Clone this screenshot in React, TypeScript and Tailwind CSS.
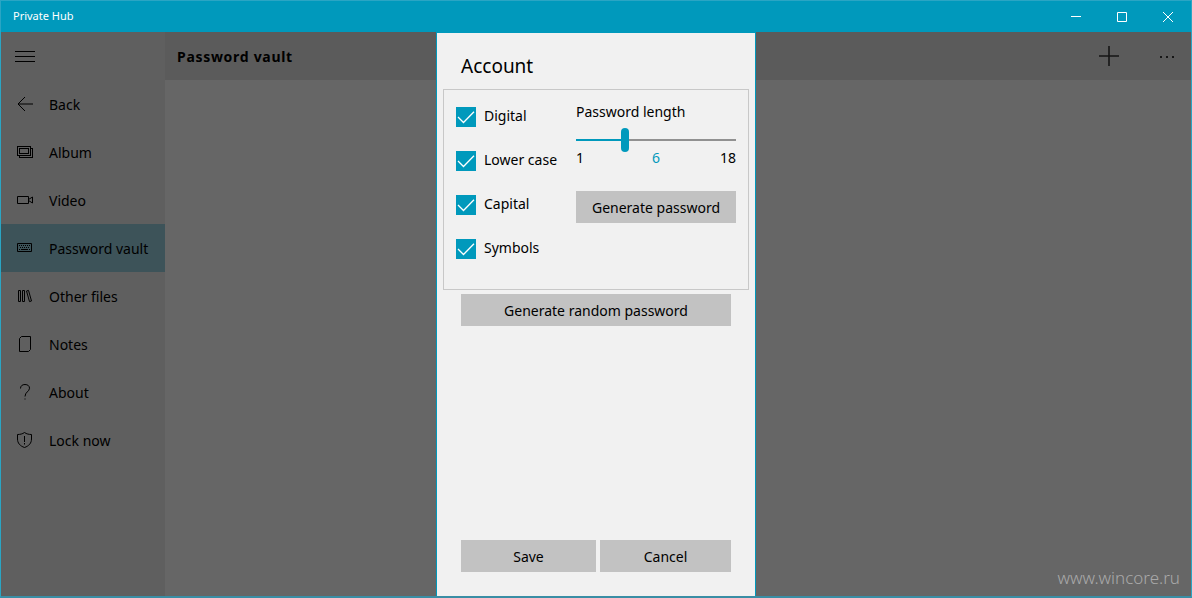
import { useState, type ReactNode } from "react";

const navItems: { label: string; icon: ReactNode }[] = [
  { label: "Back", icon: <path d="M16 8H1M8 1 1 8l7 7" /> },
  {
    label: "Album",
    icon: (
      <g shapeRendering="crispEdges">
        <path d="M.5 2.5h13v9H.5zM2.5 4.5h9v5h-9zM14 4.5h1.5v9h-13V12" />
      </g>
    ),
  },
  { label: "Video", icon: <path d="M.5 4.5h11v7H.5zM11.5 7.500l4-2.500v6l-4-2.500" /> },
  {
    label: "Password vault",
    icon: (
      <>
        <path d="M.5 3.5h14v8H.5z" />
        <path d="M2 5.5h11M3 7.5h10" strokeDasharray="1 1" />
        <path d="M2 9.5h1M4 9.5h7M12 9.5h1" />
      </>
    ),
  },
  {
    label: "Other files",
    icon: <path d="M1.5 2.5h2v11h-2zM5.5 2.5h2v11h-2zM9.5 3l2-.6 3 10.6-2 .6z" />,
  },
  { label: "Notes", icon: <path d="M4.500.5h9v13l-2 2h-9v-13z" /> },
  {
    label: "About",
    icon: (
      <>
        <path d="M3.5 4.5C3.5 2 5.200.5 8 .5s4.500 1.500 4.500 3.700c0 3.300-4.500 3.800-4.500 8.300" />
        <path d="M7.500 15h1" />
      </>
    ),
  },
  {
    label: "Lock now",
    icon: (
      <>
        <path d="M7.500.5c2 1.500 4.500 2 7 2V7c0 4-2.500 7-7 8.500C3 14 .5 11 .5 7V2.500c2.500 0 5-.5 7-2z" />
        <path d="M7.500 4v6M7.500 11v1.500" />
      </>
    ),
  },
];

const charSets = ["Digital", "Lower case", "Capital", "Symbols"];

const MIN = 1;
const MAX = 18;

function Icon({ children }: { children: ReactNode }) {
  return (
    <svg viewBox="0 0 16 16" className="size-4 shrink-0" fill="none" stroke="currentColor" aria-hidden="true">
      {children}
    </svg>
  );
}

function CheckRow({ label }: { label: string }) {
  return (
    <label className="flex h-5 items-start gap-2">
      <span className="grid size-5 shrink-0">
        <input
          type="checkbox"
          defaultChecked
          className="peer col-start-1 row-start-1 size-5 appearance-none border-2 border-[#666] checked:border-[#0099bc] checked:bg-[#0099bc]"
        />
        <svg
          viewBox="0 0 20 20"
          className="pointer-events-none invisible col-start-1 row-start-1 size-5 peer-checked:visible"
          fill="none"
          stroke="white"
          strokeWidth="1.3"
          aria-hidden="true"
        >
          <path d="m2 10 5.500 5.500L18 4.800" />
        </svg>
      </span>
      <span className="leading-[18px] whitespace-nowrap">{label}</span>
    </label>
  );
}

function Button({ children, className = "" }: { children: ReactNode; className?: string }) {
  return (
    <button type="button" className={`h-8 bg-[#c2c2c2] whitespace-nowrap hover:bg-[#b5b5b5] ${className}`}>
      {children}
    </button>
  );
}

function AccountDialog() {
  const [length, setLength] = useState(6);
  const filled = ((length - MIN) / (MAX - MIN)) * 100;

  return (
    <section
      role="dialog"
      aria-labelledby="dialog-title"
      className="absolute inset-y-0 left-1/2 flex w-80 -translate-x-1/2 flex-col border-x border-t border-[#0099bc] bg-[#f1f1f1] pb-6"
    >
      <h2 id="dialog-title" className="px-6 pt-[19px] pb-[9px] text-[19px] leading-7">
        Account
      </h2>

      {/* Password rules */}
      <div className="mx-[6px] flex h-[201px] justify-between border border-[#c8c8c8] px-3">
        <div className="flex flex-col gap-6 pt-[17px]">
          {charSets.map((c) => (
            <CheckRow key={c} label={c} />
          ))}
        </div>
        <div className="flex w-40 flex-col pt-3">
          <label htmlFor="length" className="leading-5">
            Password length
          </label>
          <div className="mt-[6px] grid h-6 items-center">
            <div className="col-start-1 row-start-1 h-[2px] bg-[#919191]">
              <div className="h-full bg-[#0099bc]" style={{ width: `${filled}%` }} />
            </div>
            <input
              id="length"
              type="range"
              min={MIN}
              max={MAX}
              value={length}
              onChange={(e) => setLength(Number(e.target.value))}
              className="z-10 col-start-1 row-start-1 h-6 w-full appearance-none bg-transparent [&::-webkit-slider-thumb]:h-6 [&::-webkit-slider-thumb]:w-2 [&::-webkit-slider-thumb]:appearance-none [&::-webkit-slider-thumb]:rounded-full [&::-webkit-slider-thumb]:bg-[#0099bc]"
            />
          </div>
          <div className="grid grid-cols-3 leading-3">
            <span>{MIN}</span>
            <output htmlFor="length" className="text-center text-[#0099bc]">
              {length}
            </output>
            <span className="text-right">{MAX}</span>
          </div>
          <Button className="mt-[27px]">Generate password</Button>
        </div>
      </div>

      <Button className="mx-6 mt-1">Generate random password</Button>

      <div className="mx-6 mt-auto flex gap-1">
        <Button className="w-[135px]">Save</Button>
        <Button className="flex-1">Cancel</Button>
      </div>
    </section>
  );
}

export default function App() {
  return (
    <div className="flex h-screen flex-col overflow-hidden border border-b-2 border-[#2aa5c4] border-b-[#3a8ea5] bg-[#666] font-['Noto_Sans','Open_Sans',sans-serif] text-[14px] text-black">
      {/* Title bar */}
      <header className="flex h-[31px] shrink-0 items-center justify-between bg-[#0099bc] pl-3 text-white">
        <span className="text-[11px]">Private Hub</span>
        <div className="flex h-full">
          <button type="button" aria-label="Minimize" className="flex w-[46px] items-center justify-center">
            <svg viewBox="0 0 10 10" className="size-[10px]" stroke="currentColor">
              <path d="M0 4.500h10" />
            </svg>
          </button>
          <button type="button" aria-label="Maximize" className="flex w-[46px] items-center justify-center">
            <svg viewBox="0 0 10 10" className="size-[10px]" fill="none" stroke="currentColor">
              <path d="M.5.500h9v9h-9z" />
            </svg>
          </button>
          <button type="button" aria-label="Close" className="flex w-[46px] items-center justify-center">
            <svg viewBox="0 0 10 10" className="size-[10px]" stroke="currentColor">
              <path d="m0 0 10 10M10 0 0 10" />
            </svg>
          </button>
        </div>
      </header>

      <div className="relative flex min-h-0 flex-1">
        {/* Side menu */}
        <nav className="flex w-[164px] shrink-0 flex-col bg-[#5f5f5f]">
          <button type="button" aria-label="Menu" className="flex h-12 w-12 items-center justify-center">
            <svg viewBox="0 0 20 12" className="h-3 w-5" stroke="currentColor">
              <path d="M0 1.500h20M0 6.500h20M0 11.500h20" />
            </svg>
          </button>
          {navItems.map((item) => (
            <a
              key={item.label}
              href="#"
              className={`flex h-12 items-center gap-4 pl-4 whitespace-nowrap ${
                item.label === "Password vault" ? "bg-[#3d5359]" : ""
              }`}
            >
              <Icon>{item.icon}</Icon>
              {item.label}
            </a>
          ))}
        </nav>

        <main className="flex min-w-0 flex-1 flex-col">
          <div className="flex h-12 items-center bg-[#5b5b5b] pl-3">
            <h1 className="text-[14px] font-bold tracking-wider">Password vault</h1>
            <div className="ml-auto flex h-full text-[#161616]">
              <button type="button" aria-label="Add" className="flex w-[68px] items-center justify-center">
                <svg viewBox="0 0 20 20" className="size-5" stroke="currentColor" strokeWidth="1.6">
                  <path d="M10 0v20M0 10h20" />
                </svg>
              </button>
              <button type="button" aria-label="More" className="flex w-12 items-center justify-center">
                <svg viewBox="0 0 14 4" className="h-1 w-[14px]" fill="currentColor">
                  <path d="M0 2h2v2H0zM6 2h2v2H6zM12 2h2v2h-2z" />
                </svg>
              </button>
            </div>
          </div>
          <a href="#" className="mt-auto mr-[11px] mb-[6px] self-end text-[17px] leading-6 font-light text-[#a9a9a9]">
            www.wincore.ru
          </a>
        </main>

        <AccountDialog />
      </div>
    </div>
  );
}
